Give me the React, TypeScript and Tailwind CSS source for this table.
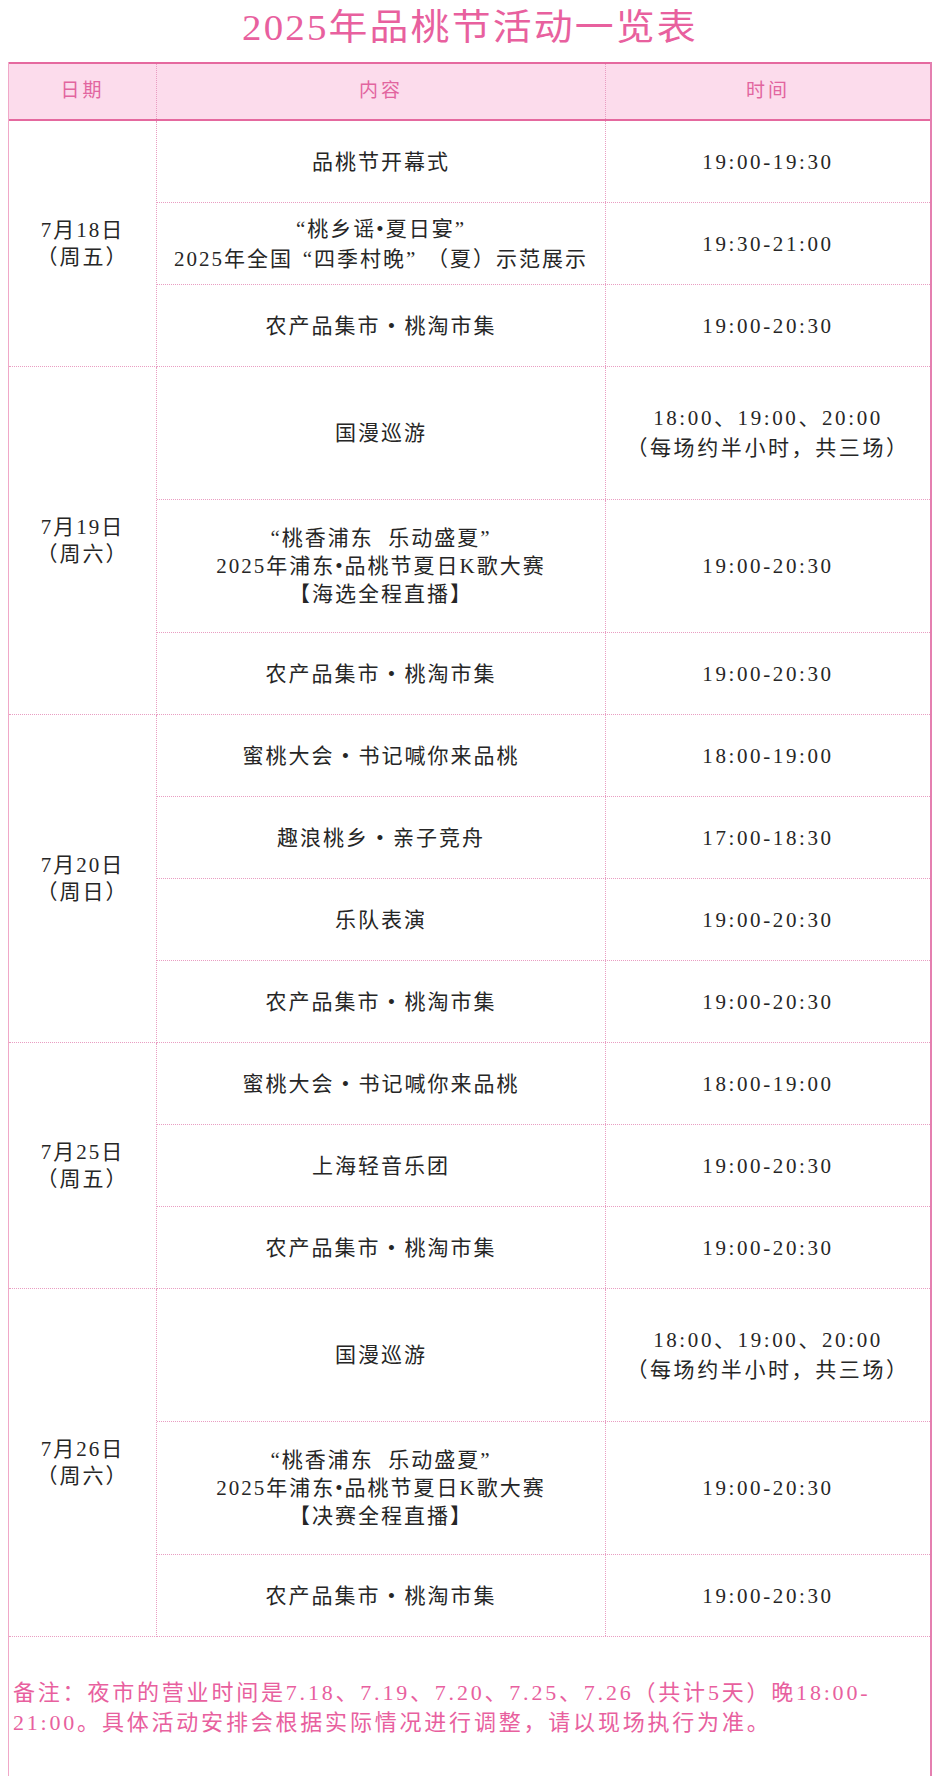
import React from "react"

type Row = { content: string[]; time: string[]; tall?: boolean }
type Day = { date: string; week: string; rows: Row[] }

const market: Row = { content: ["农产品集市 • 桃淘市集"], time: ["19:00-20:30"] }

const days: Day[] = [
  {
    date: "7月18日",
    week: "（周五）",
    rows: [
      { content: ["品桃节开幕式"], time: ["19:00-19:30"] },
      { content: ["“桃乡谣•夏日宴”", "2025年全国“四季村晚”（夏）示范展示"], time: ["19:30-21:00"] },
      market,
    ],
  },
  {
    date: "7月19日",
    week: "（周六）",
    rows: [
      { content: ["国漫巡游"], time: ["18:00、19:00、20:00", "（每场约半小时，共三场）"], tall: true },
      {
        content: ["“桃香浦东  乐动盛夏”", "2025年浦东•品桃节夏日K歌大赛", "【海选全程直播】"],
        time: ["19:00-20:30"],
        tall: true,
      },
      market,
    ],
  },
  {
    date: "7月20日",
    week: "（周日）",
    rows: [
      { content: ["蜜桃大会 • 书记喊你来品桃"], time: ["18:00-19:00"] },
      { content: ["趣浪桃乡 • 亲子竞舟"], time: ["17:00-18:30"] },
      { content: ["乐队表演"], time: ["19:00-20:30"] },
      market,
    ],
  },
  {
    date: "7月25日",
    week: "（周五）",
    rows: [
      { content: ["蜜桃大会 • 书记喊你来品桃"], time: ["18:00-19:00"] },
      { content: ["上海轻音乐团"], time: ["19:00-20:30"] },
      market,
    ],
  },
  {
    date: "7月26日",
    week: "（周六）",
    rows: [
      { content: ["国漫巡游"], time: ["18:00、19:00、20:00", "（每场约半小时，共三场）"], tall: true },
      {
        content: ["“桃香浦东  乐动盛夏”", "2025年浦东•品桃节夏日K歌大赛", "【决赛全程直播】"],
        time: ["19:00-20:30"],
        tall: true,
      },
      market,
    ],
  },
]

// full-width quote marks, like the Song typeface in the poster
function Quoted({ text }: { text: string }) {
  const parts = text.split(/([“”])/)
  return (
    <>
      {parts.map((p, i) =>
        p === "“" ? (
          <span key={i} className="inline-block w-[21px] text-right">“</span>
        ) : p === "”" ? (
          <span key={i} className="inline-block w-[21px] text-left">”</span>
        ) : (
          <React.Fragment key={i}>{p}</React.Fragment>
        )
      )}
    </>
  )
}

function Lines({ lines }: { lines: string[] }) {
  return (
    <div className={`text-center whitespace-pre ${lines.length > 2 ? "leading-[28px]" : "leading-[30px]"}`}>
      {lines.map((l, i) => (
        <div key={i}>
          <Quoted text={l} />
        </div>
      ))}
    </div>
  )
}

const dot = "border-dotted border-[#e99dc2]"

export default function App() {
  return (
    <div
      className="w-[940px] h-[1776px] overflow-hidden bg-white text-[#262626]"
      style={{ fontFamily: "'Liberation Serif', 'Noto Sans CJK SC', serif" }}
    >
      {/* title */}
      <div className="h-[62px] pb-[6px] flex items-center justify-center">
        <h1 className="inline-block scale-x-[1.08] text-[36px] tracking-[2px] text-[#e8609e] font-normal leading-none">
          2025年品桃节活动一览表
        </h1>
      </div>

      <div className="ml-[8px] w-[924px] border-l border-r-2 border-l-[#f0a8c8] border-r-[#e47fb0]">
        {/* header */}
        <div className="flex h-[59px] border-t-2 border-b-2 border-[#e5699f] bg-[#fcdcec] text-[19px] tracking-[3px] text-[#e2659f]">
          <div className={`w-[148px] flex items-center justify-center border-r ${dot}`}>日期</div>
          <div className={`w-[449px] flex items-center justify-center border-r ${dot}`}>内容</div>
          <div className="flex-1 flex items-center justify-center">时间</div>
        </div>

        {/* body */}
        <div className="text-[21px] tracking-[2px]">
          {days.map((d) => (
            <div key={d.date} className="flex">
              <div className={`w-[148px] flex flex-col items-center justify-center leading-[27px] border-r border-b ${dot}`}>
                <div>{d.date}</div>
                <div>{d.week}</div>
              </div>
              <div className="flex-1">
                {d.rows.map((r, i) => (
                  <div key={i} className={`flex border-b ${dot} ${r.tall ? "h-[133px]" : "h-[82px]"}`}>
                    <div className={`w-[449px] flex items-center justify-center border-r ${dot}`}>
                      <Lines lines={r.content} />
                    </div>
                    <div className="flex-1 flex items-center justify-center tracking-[2.6px]">
                      <Lines lines={r.time} />
                    </div>
                  </div>
                ))}
              </div>
            </div>
          ))}
        </div>

        {/* note */}
        <div className="h-[140px] pt-[41px] pl-[4px] text-[22px] leading-[30px] tracking-[2.8px] text-[#e8609e] whitespace-nowrap">
          <div>备注：夜市的营业时间是7.18、7.19、7.20、7.25、7.26（共计5天）晚18:00-</div>
          <div>21:00。具体活动安排会根据实际情况进行调整，请以现场执行为准。</div>
        </div>
      </div>
    </div>
  )
}
